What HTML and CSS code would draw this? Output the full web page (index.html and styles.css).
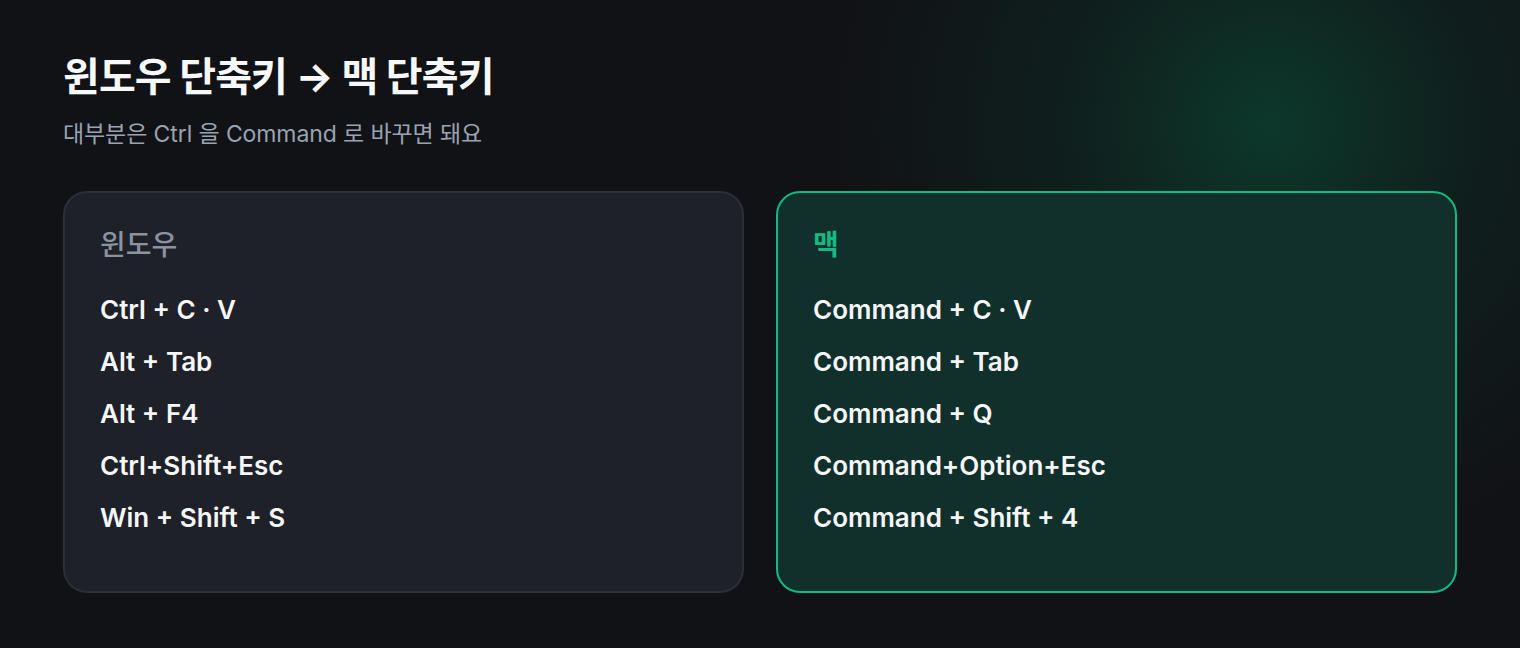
FILE: index.html
```
<!DOCTYPE html>
<html lang="ko">
<head>
<meta charset="utf-8">
<title>윈도우 단축키 → 맥 단축키</title>
<link rel="stylesheet" href="styles.css">
</head>
<body>
<main class="page">
  <header class="intro">
    <h1 class="title">윈도우 단축키 → 맥 단축키</h1>
    <p class="subtitle">대부분은 Ctrl 을 Command 로 바꾸면 돼요</p>
  </header>
  <section class="cards">
    <div class="card card-win">
      <h2 class="card-head">윈도우</h2>
      <ul class="keys">
        <li>Ctrl + C · V</li>
        <li>Alt + Tab</li>
        <li>Alt + F4</li>
        <li>Ctrl+Shift+Esc</li>
        <li>Win + Shift + S</li>
      </ul>
    </div>
    <div class="card card-mac">
      <h2 class="card-head">맥</h2>
      <ul class="keys">
        <li>Command + C · V</li>
        <li>Command + Tab</li>
        <li>Command + Q</li>
        <li>Command+Option+Esc</li>
        <li>Command + Shift + 4</li>
      </ul>
    </div>
  </section>
</main>
</body>
</html>
```
FILE: styles.css
```
* { box-sizing: border-box; }
html, body { margin: 0; height: 100%; }
body {
  background-color: #111216;
  background-image: radial-gradient(circle 440px at 1270px 125px, rgba(12, 58, 44, 0.95) 0%, rgba(14, 40, 34, 0.6) 45%, rgba(17, 18, 22, 0) 100%);
  background-repeat: no-repeat;
  font-family: Inter, "Noto Sans CJK KR", sans-serif;
  color: #f5f6f8;
}
.page {
  padding: 53px 63px 0 63px;
}
.title {
  margin: 0;
  font-size: 40px;
  line-height: 48px;
  font-weight: 700;
  letter-spacing: -0.9px;
  color: #f7f8fa;
}
.subtitle {
  margin: 18px 0 0 0;
  font-size: 23px;
  line-height: 30px;
  color: #9aa3b1;
  letter-spacing: -0.1px;
}
.cards {
  margin-top: 42px;
  display: grid;
  grid-template-columns: 1fr 1fr;
  gap: 32px;
  width: 1394px;
}
.card {
  border-radius: 24px;
  border: 2px solid #2c2f38;
  background: #1f2129;
  padding: 36px 35px 57px 35px;
}
.card-mac {
  border-color: #13b981;
  background: #12302b;
}
.card-head {
  margin: 0;
  font-size: 28px;
  line-height: 32px;
  font-weight: 500;
  color: #8b93a0;
}
.card-mac .card-head {
  color: #17b982;
  font-weight: 700;
}
.keys {
  list-style: none;
  margin: 33px 0 0 0;
  padding: 0;
  display: flex;
  flex-direction: column;
  gap: 20px;
}
.keys li {
  font-size: 26px;
  line-height: 32px;
  font-weight: 600;
  color: #f5f6f8;
}
```
